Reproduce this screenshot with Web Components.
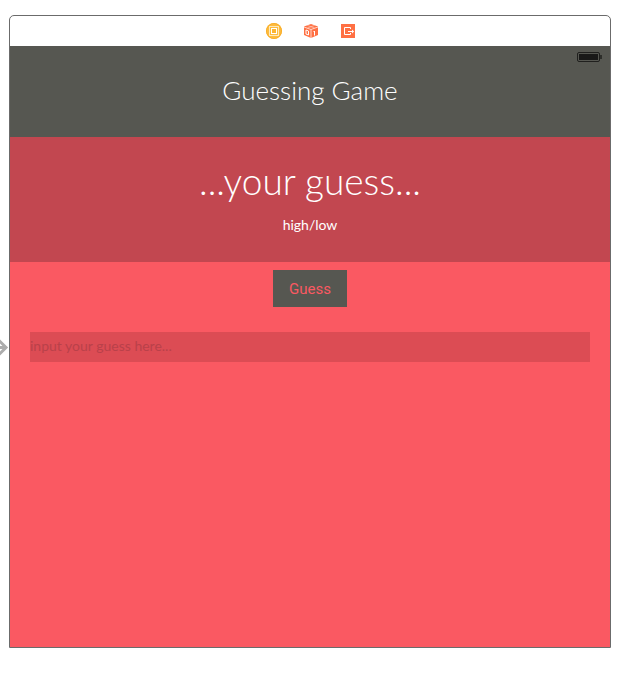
<!DOCTYPE html>
<html lang="en">
<head>
<meta charset="utf-8">
<title>Guessing Game</title>
<style>
html,body{height:100%;margin:0}
body{background:#fff;font-family:Lato,"Open Sans",sans-serif}
</style>
</head>
<body>
<story-board>
  <scene-frame>
    <scene-dock slot="dock"></scene-dock>
    <game-header>Guessing Game</game-header>
    <guess-result><span slot="guess">...your guess...</span><span slot="hint">high/low</span></guess-result>
    <guess-form></guess-form>
  </scene-frame>
</story-board>
<script>
const define = (name, html) => customElements.define(name, class extends HTMLElement {
  constructor() {
    super();
    this.attachShadow({mode: "open"}).innerHTML = html;
  }
});

define("story-board", `
<style>
:host{box-sizing:border-box;min-height:100vh;padding:15px 25px 32px 9px;position:relative;display:flex;flex-direction:column;overflow:hidden}
.entry{position:absolute;left:0;top:339px;width:9px;height:17px}
</style>
<svg class="entry" viewBox="0 0 9 17" aria-hidden="true"><path d="M-2 8.500H5M-1 1.500L6 8.500L-1 15.500" fill="none" stroke="#acacac" stroke-width="3"/></svg>
<slot></slot>`);

define("scene-frame", `
<style>
:host{display:flex;flex-direction:column;flex:1;border:1px solid #6b6b6b;border-radius:5px 5px 0 0;overflow:hidden;background:#fff}
main{flex:1;background:#fa5962}
</style>
<slot name="dock"></slot>
<main><slot></slot></main>`);

define("scene-dock", `
<style>
:host{display:flex;justify-content:center;align-items:center;gap:21px;height:30px;padding-left:2px}
svg{display:block;width:16px;height:16px}
</style>
<svg viewBox="0 0 16 16" aria-hidden="true"><circle cx="8" cy="8" r="8" fill="#fdbc40"/><circle cx="8" cy="8" r="7.500" fill="none" stroke="#f9ae2b"/><rect x="3.500" y="3.500" width="9" height="9" fill="none" stroke="#ffe9b8"/><rect x="5.500" y="5.500" width="5" height="5" fill="#fdb52f" stroke="#fff"/></svg>
<svg viewBox="0 0 16 16" aria-hidden="true"><path d="M8 1L15 3.500V12L8 15L1 12V3.500Z" fill="#ff7043"/><path d="M1 4L8 6.500L15 4M8 6.500V15" fill="none" stroke="#fff" stroke-width=".7"/><path d="M4.500 2.500L11.500 5M11.500 2.500L4.500 5" fill="none" stroke="#fff" stroke-width=".4"/><path d="M3 7L5.500 8V12L3 11ZM10.500 9L11.500 8V12.500" fill="none" stroke="#fff" stroke-width="1"/></svg>
<svg viewBox="0 0 16 16" aria-hidden="true"><path d="M1 1H15V15H1Z" fill="#ff7043"/><path d="M10.500 6V4.500H4.500V11.500H10.500V10M8 8.500H13.500" fill="none" stroke="#fff"/><path d="M12 6.500L14 8.500L12 10.500Z" fill="#fff"/></svg>`);

define("game-header", `
<style>
:host{display:block;position:relative;background:#565751;color:#fff;padding:28px 20px 31px;text-align:center}
h1{margin:0;font-size:26px;line-height:32px;font-weight:300}
svg{position:absolute;right:8px;top:5px;width:25px;height:12px}
</style>
<svg viewBox="0 0 25 12" role="img" aria-label="Battery full"><rect x=".5" y="1.500" width="22" height="9" rx="1.500" fill="none" stroke="#20201e"/><rect x="2" y="3" width="19" height="6" fill="#191918"/><path d="M24 4V8" stroke="#20201e" stroke-width="1.500"/></svg>
<h1><slot></slot></h1>`);

define("guess-result", `
<style>
:host{display:block;background:#c24750;color:#fff;padding:22px 20px 27px;text-align:center}
p{margin:0}
.guess{font-size:37px;line-height:44px;font-weight:300}
.hint{font-size:14px;line-height:20px;margin-top:12px}
</style>
<p class="guess"><slot name="guess"></slot></p>
<p class="hint"><slot name="hint"></slot></p>`);

define("guess-form", `
<style>
:host{display:block}
form{display:flex;flex-direction:column;align-items:center;gap:25px;padding:8px 20px 20px;margin:0}
button{border:0;border-radius:0;margin:0;padding:9px 16px 8px;background:#565751;color:#fa5962;font:400 15px/20px Roboto,sans-serif}
input{box-sizing:border-box;width:100%;height:30px;border:0;border-radius:0;margin:0;padding:0 0 3px;background:#dc4c54;color:#8f343b;font:400 14px/20px Lato,sans-serif}
input::placeholder{color:#b9414a;opacity:1}
</style>
<form>
  <button type="button">Guess</button>
  <input type="text" aria-label="Your guess" placeholder="input your guess here...">
</form>`);
</script>
</body>
</html>
